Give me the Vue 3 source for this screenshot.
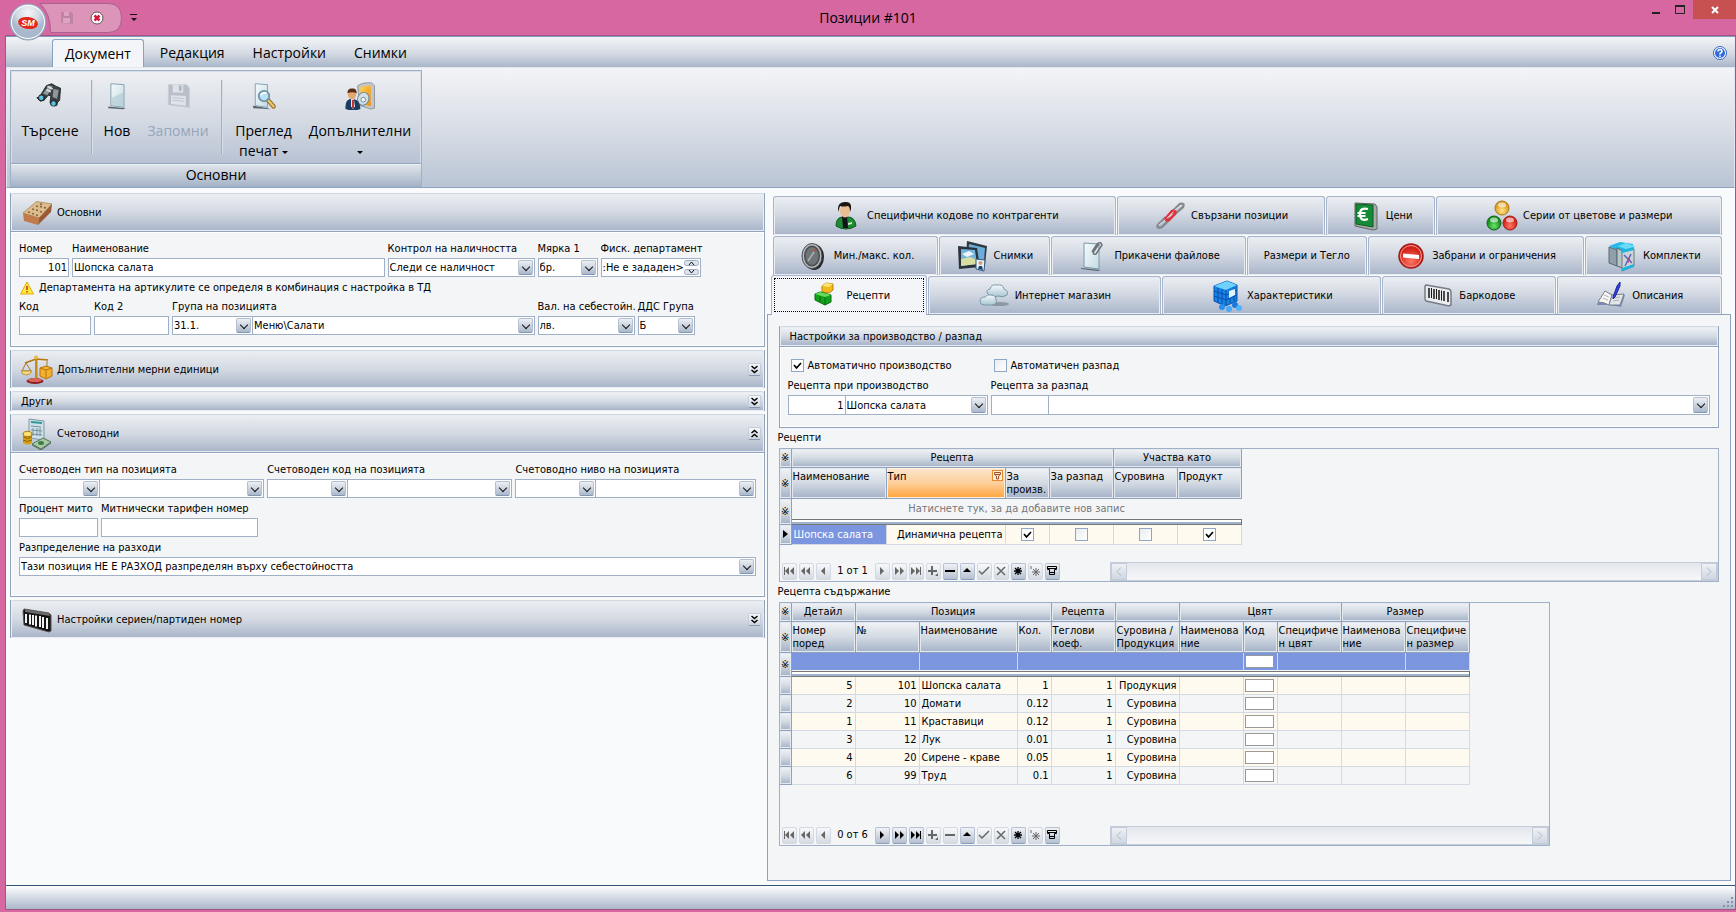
<script setup>
import { ref } from 'vue'

const icons = {
  binoculars: '<path d="M4 17 12 4l6-2 5 3 5 2-1 14-6 6-5-3 1-8-3-1-4 5-5 2-4-4z" fill="#3c4246" stroke="#1d2224"/><path d="M8 13 15 4l4 1-6 10zM20 8l6 1-2 10-5-2z" fill="#8f999c"/><path d="M13 5l6 3M12 9l5 2" stroke="#d8dfe0" stroke-width="2"/><circle cx="6.500" cy="18" r="4" fill="#2a3134"/><circle cx="6" cy="18" r="2.500" fill="#5bc3e4"/><ellipse cx="20.500" cy="24" rx="4.500" ry="4" fill="#2a3134"/><circle cx="20" cy="24.500" r="2.500" fill="#5bc3e4"/>',
  page: '<path d="M6 28 26 30l-3 1-17-1z" fill="#5a6670"/><path d="M9 2 24 3v26L9 27z" fill="url(#gPage)" stroke="#7b98a8"/><path d="M10 18 23 12v16l-13-2z" fill="#b4cdd6" opacity=".7"/>',
  floppyBig: '<path d="M5 3h21l3 4v22L5 26z" fill="#b9bfc9" stroke="#c8cdd5"/><path d="M10 3h12v9H10z" fill="#dfe2e7"/><path d="M17 4h3v6h-3z" fill="#aeb5c0"/><path d="M8 15l17 1v11L8 25z" fill="#dfe2e8"/><path d="M10 18l13 1M10 21l13 1" stroke="#bcc2cc"/>',
  preview: '<path d="M3 27 20 30l4 1-20-1z" fill="#59646e"/><path d="M6 2 20 3v26L6 27z" fill="url(#gPage)" stroke="#7b98a8"/><path d="m20 20 7 8" stroke="#94702b" stroke-width="5" stroke-linecap="round"/><path d="m20 20 7 8" stroke="#e9c971" stroke-width="2.500" stroke-linecap="round"/><circle cx="16" cy="16" r="6" fill="#b7e2f6" stroke="#6f8fa3" stroke-width="2"/><path d="M12 15q3-4 7-2" stroke="#fff" stroke-width="2" fill="none"/>',
  userDoor: '<path d="M14 4Q20 0 29 1l3 3v24l-4 1-12-4z" fill="#c3c7cb" stroke="#8c9298"/><path d="M17 5 28 4v22l-11-3z" fill="url(#gOrange)"/><ellipse cx="20" cy="18" rx="6" ry="7" fill="#cfe0e8" stroke="#6f8490" transform="rotate(20 20 18)"/><circle cx="20" cy="19" r="2.500" fill="#f6f9fa" stroke="#73848c"/><path d="M1 29q-1-11 7-11 8 0 9 11-8 3-16 0z" fill="#1c3d63"/><path d="M7 18h3l1 8-2 3-2-3z" fill="#fff"/><path d="m8 19 2 0 0 8-1 1-1-1z" fill="#c22"/><ellipse cx="8" cy="13" rx="4.500" ry="5.500" fill="#e3a770"/><path d="M3 12q0-6 6-5 4 0 4 5-5-2-10 0z" fill="#5b2e16"/>',
  brick: '<path d="M2 16 15 5q1-1 3 0l13 2-13 14z" fill="#dcbd8d" stroke="#b18351" stroke-width=".8"/><path d="M2 16 18 21l-1 7L3 24z" fill="#c07a4b"/><path d="M18 21 31 7l-1 8-13 13z" fill="#9a5b34"/><path d="m7 15 2 .5M11 12l2 .5M15 9l2 .5M11 16.500l2 .5M15 13l2 .5M19 9.500l2 .5M15 18l2 .5M19 14.500l2 .5M23 10.500l2 .5M19 7l2 .5M8 18" stroke="#8a6240" stroke-width="1.600"/>',
  scales: '<path d="M14 4h2.500v22H14z" fill="#c58b1d"/><path d="M4 9 15 5l12 1" stroke="#b57612" stroke-width="1.700" fill="none"/><path d="M5 9 1 17h9zM26 7v6" fill="none" stroke="#a77824"/><path d="M0 17h11q-1 4-6 4-4 0-5-4z" fill="#f3d98b" stroke="#b98523" stroke-width=".8"/><circle cx="15" cy="3.500" r="2" fill="#e9b840"/><path d="m19 14 6-2 6 2v8l-6 3-6-3z" fill="#f3b02c" stroke="#b9750e"/><path d="m19 14 6 2 6-2M25 16v8" stroke="#b9750e" fill="none"/><ellipse cx="14" cy="27" rx="8.500" ry="3" fill="#8f1f24"/><ellipse cx="14" cy="26" rx="7" ry="2" fill="#d8655a"/>',
  accounting: '<path d="m8 1 15 2v19L8 20z" fill="#cfe0e8" stroke="#7b98a8"/><path d="m10 4 11 1" stroke="#2f9a95" stroke-width="2"/><path d="m10 8 10 1M10 12l11 1M10 16l11 1M12 10v8M16 10v8M19 10v8" stroke="#70929f"/><path d="M2 16h9v9q-4 3-9 0z" fill="#d8a110"/><ellipse cx="6.500" cy="16" rx="4.500" ry="2.500" fill="#ffe373" stroke="#a87307"/><path d="M2 19q4 3 9 0M2 22q4 3 9 0" stroke="#8c5f00" fill="none"/><path d="m11 26 11-6 8 4-10 7z" fill="#a8c9a4" stroke="#52735a"/><ellipse cx="20" cy="25" rx="3" ry="2" fill="#3f7d4f"/><path d="m11 27 9 5 10-7" stroke="#52735a" fill="none"/>',
  barcodeDark: '<path d="M3 5 28 9l2 2v16l-2 1L3 21 2 7z" fill="#141414" stroke="#555"/><path d="M4 5.500 28 9l1 3L4 8z" fill="#6b6b6b"/><path d="M5 10v9M9 10.500v10M12 11v10M15 11.500v11M19 12v11M22 13v11M26 14v11" stroke="#f2f2f2" stroke-width="2"/>',
  man: '<path d="M6 26q0-9 7-9h5q7 0 8 9-10 6-20 0z" fill="#1f8a34" stroke="#0b5a1c"/><path d="m12 16 5 0 1 12h-5z" fill="#101418"/><path d="m18 23 4-1v2l-4 1z" fill="#cfeac8"/><ellipse cx="15" cy="11" rx="5" ry="6.500" fill="#eabd92"/><path d="M8 9Q8 2 15 2q7-1 6 7l-1 3q0-5-2-6-6 1-8 0-1 2-1 6z" fill="#1d1512"/>',
  chain: '<g fill="none" stroke-linecap="round"><path d="m4 25 7-7q4-1 3 3l-6 6q-6 2-4-2z" stroke="#868b90" stroke-width="2.500"/><path d="m20 10 6-6q5-1 3 3l-7 6q-5 1-2-3z" stroke="#868b90" stroke-width="2.500"/><path d="m12 18 6-7q5-1 3 3l-6 6q-5 1-3-2z" stroke="#e2303b" stroke-width="2.500"/><path d="m5 25 6-5M21 10l6-5" stroke="#e4e6e8"/><path d="m13 18 6-6" stroke="#ffb4b4"/></g>',
  euro: '<path d="m6 3 20 1 2 3v22l-4 1L6 26z" fill="#a7aba9" stroke="#606662"/><path d="m7 4 17 1v22L7 24z" fill="#168a37" stroke="#0a5c20"/><path d="M19 9q-8-2-8 5 0 8 8 5M8.500 13h8M8.500 16h8" stroke="#fff" stroke-width="2.200" fill="none"/>',
  balls: '<circle cx="16" cy="8" r="7" fill="url(#gGold)" stroke="#a77814"/><circle cx="8" cy="23" r="7" fill="url(#gGreen)" stroke="#11621a"/><circle cx="24" cy="23" r="7" fill="url(#gRed)" stroke="#98231a"/><ellipse cx="16" cy="5" rx="4" ry="2.500" fill="#fff" opacity=".6"/><ellipse cx="8" cy="20" rx="4" ry="2.500" fill="#fff" opacity=".6"/><ellipse cx="24" cy="20" rx="4" ry="2.500" fill="#fff" opacity=".6"/>',
  dial: '<ellipse cx="17" cy="17" rx="10" ry="13" fill="#24272a"/><ellipse cx="15" cy="16" rx="10" ry="12.500" fill="#b5b9bb" stroke="#4c5054"/><ellipse cx="15" cy="16" rx="8" ry="10.500" fill="#484d50"/><ellipse cx="15" cy="16" rx="6.500" ry="9" fill="#6f7477"/><path d="m11 21 6-9" stroke="#aeb2b4" stroke-width="1.500"/><path d="m17.500 11 1.500-2" stroke="#e23b2a" stroke-width="1.500"/>',
  photos: '<path d="m10 1 20 5-2 19L9 19z" fill="#303940"/><path d="m12 4 16 4-1 13-16-4z" fill="#6cacd8"/><path d="M1 6 20 8l3 19L2 29z" fill="#28333c"/><path d="m4 9 14 1 2 14-16 2z" fill="#74b4df"/><path d="m4 19 9-2 7 3v4L4 26z" fill="#d8dfa0"/><path d="m5 14 7-3 5 3-7 3z" fill="#eff7fb"/><path d="m19 19 9 1-1 11-8-2z" fill="#e8f2f9" stroke="#33597a"/><circle cx="23.500" cy="23" r="2" fill="#d99d70"/><path d="m21 29 1-3h3l1 4z" fill="#1c4774"/>',
  attach: '<path d="m4 28 20 2-3 1-17-2z" fill="#59646e"/><path d="M7 3 22 4v25L7 27z" fill="url(#gPage)" stroke="#7b98a8"/><path d="m15 12 5-8q4-3 5 1l-6 9q-4 1-2-3l5-7" stroke="#6d7378" stroke-width="1.500" fill="none"/>',
  noEntry: '<circle cx="16" cy="16" r="12" fill="url(#gRed)" stroke="#a51b16" stroke-width="1.500"/><circle cx="16" cy="16" r="10.500" fill="none" stroke="#f59a90"/><path d="M8 13.500 24 15v4L8 17.500z" fill="#fff"/>',
  boxes: '<path d="m3 6 11-4 13 2v5l-12 3z" fill="#25b9e8"/><path d="m3 7 8 3v16l-8-3z" fill="#8fa0a8" stroke="#5a6a73"/><path d="m11 8 6 3v17l-6-2z" fill="#b9c5ca" stroke="#5a6a73"/><path d="m12 6 8-3 9 3-7 4z" fill="#6bdcf7"/><path d="m16 11 12-2v17l-12 5z" fill="#cdd4d6" stroke="#697a81"/><path d="m16 10 12-3v3l-12 3zM16 28l12-4v3l-12 4z" fill="#1fb4df"/><path d="m18 15 8 8M25 14l-6 12" stroke="#5a62c8" stroke-width="1.500"/><path d="m21 18 3 1-2 4" stroke="#d33b6f" fill="none"/>',
  cubes: '<path d="m14 6 4-3 7 1v6l-4 3-7-1z" fill="#f3b91a" stroke="#b9830d"/><path d="m14 6 7 1 4-3-7-1z" fill="#ffe574"/><path d="m7 14 5-2 11 3v7l-6 3-10-5z" fill="#12a31c" stroke="#0a6a12"/><path d="m7 14 5-2 11 3-6 2z" fill="#63de5a"/><path d="m17 17v8M12 16v6" stroke="#0a6a12"/>',
  clouds: '<ellipse cx="21" cy="24" rx="10" ry="2" fill="#6b7880" opacity=".6"/><path d="M10 14q-3-4 2-5 1-5 7-4 6-1 7 4 5 2 3 6-4 3-9 1-7 2-10-2z" fill="url(#gCloud)" stroke="#7b98a6"/><path d="M2 21q0-4 5-4 2-3 6-2 5 0 5 5 2 4-4 5H6q-4 0-4-4z" fill="url(#gCloud)" stroke="#7b98a6"/>',
  blueCube: '<path d="M4 6 17 1l10 4v16l-12 5L4 21z" fill="#1684e2" stroke="#0a4ea8"/><path d="m4 6 12 4 11-5-10-4z" fill="#6fd1ff"/><path d="M16 10v15M8 8v15M12 9v15M20 9v14M24 7v14M4 11l12 4 11-5M4 16l12 4 11-5" stroke="#0b4dad" fill="none"/><path d="m19 11 6-2v6l-6 3z" fill="#dff4ff"/><circle cx="12" cy="27" r="3" fill="#2b8ff0"/><circle cx="19" cy="29" r="3" fill="#46a9fa"/><circle cx="25" cy="25" r="3" fill="#1778dd"/><circle cx="29" cy="28" r="3" fill="#4cb4ff"/>',
  barcodeLight: '<path d="M4 5 27 9q2 1 2 3v13l-2 1L4 21q-1-1-1-3V6z" fill="#e9ebee" stroke="#757c86" stroke-width="1.500"/><path d="M7 8v10M12 9v10M17 10v10M22 11v10M26 12v10" stroke="#151515" stroke-width="1.500"/><path d="M9.500 8v10M14.500 9v10M19.500 10.500v10" stroke="#151515"/>',
  notebook: '<path d="m2 24 7-11 8 2 13 0-4 12-11-2-13 0z" fill="#7c87bd"/><path d="m3 22 7-11 7 4-3 10q-5-3-11-3z" fill="#f7f8f4" stroke="#77808a"/><path d="m17 15 12-1-4 11-11 0z" fill="#e2e6e8" stroke="#77808a"/><path d="m9 15 5 2M8 18l5 2M19 18l6-1M18 21l6-1" stroke="#aeb4b8"/><path d="m18 17 4-11 3-4 0 4-5 11-2 2z" fill="#3340dd" stroke="#20279e"/>',
}

const sideGroups = [{ label: 'Основни', icon: 'brick' }]
const tabRows = [
  [
    { t: 'Специфични кодове по контрагенти', i: 'man', w: 346 },
    { t: 'Свързани позиции', i: 'chain', w: 208 },
    { t: 'Цени', i: 'euro', w: 109 },
    { t: 'Серии от цветове и размери', i: 'balls', w: 287 },
  ],
  [
    { t: 'Мин./макс. кол.', i: 'dial', w: 167 },
    { t: 'Снимки', i: 'photos', w: 111 },
    { t: 'Прикачени файлове', i: 'attach', w: 196 },
    { t: 'Размери и Тегло', w: 120 },
    { t: 'Забрани и ограничения', i: 'noEntry', w: 218 },
    { t: 'Комплекти', i: 'boxes', w: 138 },
  ],
  [
    { t: 'Рецепти', i: 'cubes', w: 157, on: true },
    { t: 'Интернет магазин', i: 'clouds', w: 234 },
    { t: 'Характеристики', i: 'blueCube', w: 221 },
    { t: 'Баркодове', i: 'barcodeLight', w: 174 },
    { t: 'Описания', i: 'notebook', w: 166 },
  ],
]

const accounts = ['Счетоводен тип на позицията', 'Счетоводен код на позицията', 'Счетоводно ниво на позицията']

const autoMake = ref(true)
const autoSplit = ref(false)
const number = ref('101')
const name = ref('Шопска салата')
const recipeNo = ref('1')

const heads = [
  'Номер\nпоред', '№', 'Наименование', 'Кол.', 'Теглови\nкоеф.', 'Суровина /\nПродукция',
  'Наименова\nние', 'Код', 'Специфиче\nн цвят', 'Наименова\nние', 'Специфиче\nн размер',
]
const rows = [
  [5, 101, 'Шопска салата', '1', 'Продукция'],
  [2, 10, 'Домати', '0.12', 'Суровина'],
  [1, 11, 'Краставици', '0.12', 'Суровина'],
  [3, 12, 'Лук', '0.01', 'Суровина'],
  [4, 20, 'Сирене - краве', '0.05', 'Суровина'],
  [6, 99, 'Труд', '0.1', 'Суровина'],
]

const nav = {
  first: { n: 'Първи', d: '<path d="M2 3h1v8H2zM7 3v8L3 7zM12 3v8L8 7z"/>' },
  prevPage: { n: 'Предишна страница', d: '<path d="M6 3v8L2 7zM11 3v8L7 7z"/>' },
  prev: { n: 'Предишен', d: '<path d="M9 3v8L5 7z"/>' },
  next: { n: 'Следващ', d: '<path d="M5 3v8l4-4z"/>' },
  nextPage: { n: 'Следваща страница', d: '<path d="M3 3v8l4-4zM8 3v8l4-4z"/>' },
  last: { n: 'Последен', d: '<path d="M2 3v8l4-4zM7 3v8l4-4zM11 3h1v8h-1z"/>' },
  add: { n: 'Добави', d: '<path d="M5 2h2v4h4v2H7v3H5V8H2V6h3zM12 9v3H9z"/>' },
  remove: { n: 'Изтрий', d: '<path d="M2 6h10v2H2z"/>' },
  edit: { n: 'Редактирай', d: '<path d="m7 4 4 4H3z"/>' },
  post: { n: 'Потвърди', d: '<path d="m2 7 3 3 7-7" fill="none" stroke="currentColor" stroke-width="1.500"/>' },
  cancel: { n: 'Откажи', d: '<path d="m3 3 8 8M11 3l-8 8" fill="none" stroke="currentColor" stroke-width="1.500"/>' },
  mark: { n: 'Запомни позиция', d: '<path d="M7 3v8M3 7h8M4 4l6 6M10 4l-6 6" fill="none" stroke="currentColor" stroke-width="1.300"/>' },
  goMark: { n: 'Отиди на позиция', d: '<path d="M8 4v8M4 8h8M5 5l6 6M11 5l-6 6M3 2v3" fill="none" stroke="currentColor"/>' },
  filter: { n: 'Филтър', d: '<path d="M2.500 2.500h9v3h-2v5h-5v-5h-2zM3 4.500h8M5 8.500h4" fill="none" stroke="currentColor"/>' },
}
const left = ['first', 'prevPage', 'prev']
const right = ['next', 'nextPage', 'last', 'add', 'remove', 'edit', 'post', 'cancel', 'mark', 'goMark', 'filter']
const enabledOne = ['remove', 'edit', 'mark', 'filter']
const enabledTwo = ['next', 'nextPage', 'last', 'edit', 'mark', 'filter']
const isOn = (list, k) => list.includes(k)
</script>

<template>
  <div class="window">
    <svg class="defs" width="0" height="0" aria-hidden="true">
      <defs>
        <linearGradient id="gPage" x1="0" y1="0" x2="1" y2="1"><stop offset="0" stop-color="#f5fbfd" /><stop offset="1" stop-color="#c3dbe3" /></linearGradient>
        <linearGradient id="gOrange" x1="0" y1="0" x2="1" y2="1"><stop offset="0" stop-color="#ffd24a" /><stop offset="1" stop-color="#f28a0c" /></linearGradient>
        <linearGradient id="gCloud" x1="0" y1="0" x2="0" y2="1"><stop offset="0" stop-color="#f4fafc" /><stop offset="1" stop-color="#a9c6d2" /></linearGradient>
        <radialGradient id="gGold" cy=".7"><stop offset="0" stop-color="#ffe48c" /><stop offset="1" stop-color="#dd9d1c" /></radialGradient>
        <radialGradient id="gGreen" cy=".7"><stop offset="0" stop-color="#6ee36a" /><stop offset="1" stop-color="#0f8f1c" /></radialGradient>
        <radialGradient id="gRed" cy=".7"><stop offset="0" stop-color="#ff7a62" /><stop offset="1" stop-color="#d3241c" /></radialGradient>
        <radialGradient id="gOrb" cy=".25"><stop offset="0" stop-color="#f6f8fa" /><stop offset=".6" stop-color="#d3dae4" /><stop offset="1" stop-color="#a9b8cc" /></radialGradient>
      </defs>
    </svg>

    <header class="titlebar">
      <div class="quick">
        <svg class="quick-shape" width="130" height="36" viewBox="0 0 130 36" aria-hidden="true">
          <path d="M40 3.500H108Q121.500 3.500 121.500 18T108 32.500H50.500Q51 14 40 3.500z" fill="#dd94b9" stroke="#a9628c" />
        </svg>
        <button class="qbtn" aria-label="Запис" disabled>
          <svg width="14" height="14" viewBox="0 0 14 14"><path d="M1 1h10l2 2v10L1 12z" fill="#c084a3" /><path d="M4 1h5v4H4zM3 7h7v5H3z" fill="#dfa3c1" /></svg>
        </button>
        <button class="qbtn" aria-label="Отказ">
          <svg width="14" height="14" viewBox="0 0 14 14"><circle cx="7" cy="7" r="6" fill="#fff" stroke="#555" /><path d="m4.500 4.500 5 5M9.500 4.500l-5 5" stroke="#d4183c" stroke-width="2.500" /></svg>
        </button>
        <button class="qmenu" aria-label="Настройка на лентата">
          <svg width="8" height="8" viewBox="0 0 8 8"><path d="M0 0h7v1H0zM1 4h6L4 7z" fill="#111" /></svg>
        </button>
      </div>
      <button class="orb" aria-label="Меню">
        <svg width="38" height="38" viewBox="0 0 38 38">
          <circle cx="19" cy="19" r="18" fill="url(#gOrb)" stroke="#8ea0b9" />
          <circle cx="19" cy="19" r="16.500" fill="none" stroke="#fff" />
          <ellipse cx="19" cy="20" rx="10" ry="6" fill="#e2291d" transform="rotate(8 19 20)" />
          <text x="19" y="23" text-anchor="middle" class="orb-text">SM</text>
        </svg>
      </button>
      <h1>Позиции #101</h1>
      <div class="wbtns">
        <button class="min" aria-label="Минимизирай"><svg width="10" height="10" viewBox="0 0 10 10"><path d="M1 7h8v2H1z" fill="#222" /></svg></button>
        <button class="max" aria-label="Увеличи"><svg width="10" height="10" viewBox="0 0 10 10"><path d="M.5 1h9v7.500h-9z" fill="none" stroke="#222" /><path d="M0 0h10v2H0z" fill="#222" /></svg></button>
        <button class="close" aria-label="Затвори"><svg width="8" height="8" viewBox="0 0 8 8"><path d="m1 1 6 6M7 1 1 7" stroke="#fff" stroke-width="2" /></svg></button>
      </div>
    </header>

    <div class="frame">
      <nav class="rtabs">
        <button class="rtab on">Документ</button>
        <button class="rtab">Редакция</button>
        <button class="rtab">Настройки</button>
        <button class="rtab">Снимки</button>
        <button class="help" aria-label="Помощ">
          <svg width="14" height="14" viewBox="0 0 14 14"><circle cx="7" cy="7" r="6.500" fill="#fff" stroke="#2d62c4" /><circle cx="7" cy="7" r="5" fill="#2f6ad9" /><path d="M5 5.500q0-2 2-2t2 2q0 1-2 2v1M7 9.500v1.500" fill="none" stroke="#fff" stroke-width="1.500" /></svg>
        </button>
      </nav>

      <div class="ribbon">
        <section class="rgroup">
          <div class="ritems">
            <button class="rbtn w76"><svg width="28" height="28" viewBox="0 0 32 32" v-html="icons.binoculars"></svg><span>Търсене</span></button>
            <i class="rsep"></i>
            <button class="rbtn w42"><svg width="28" height="28" viewBox="0 0 32 32" v-html="icons.page"></svg><span>Нов</span></button>
            <button class="rbtn w80 off" disabled><svg width="28" height="28" viewBox="0 0 32 32" v-html="icons.floppyBig"></svg><span>Запомни</span></button>
            <i class="rsep"></i>
            <button class="rbtn w75"><svg width="28" height="28" viewBox="0 0 32 32" v-html="icons.preview"></svg><span>Преглед</span><span>печат <i class="tri"></i></span></button>
            <button class="rbtn w118"><svg width="32" height="28" viewBox="0 0 33 30" v-html="icons.userDoor"></svg><span>Допълнителни</span><span><i class="tri"></i></span></button>
          </div>
          <div class="rcap">Основни</div>
        </section>
      </div>

      <main class="body">
        <div class="side">
          <section v-for="g in sideGroups" :key="g.label" class="group">
            <h2 class="ghead"><svg width="32" height="32" viewBox="0 0 32 32" v-html="icons[g.icon]"></svg>{{ g.label }}</h2>
            <div class="gbody first">
              <div class="frow pad">
                <label class="f w50">Номер<input v-model="number" class="num"></label>
                <label class="f grow">Наименование<input v-model="name"></label>
                <label class="f w147">Контрол на наличността<span class="combo"><select><option>Следи се наличност</option></select><i class="arr"></i></span></label>
                <label class="f w60">Мярка 1<span class="combo"><select><option>бр.</option></select><i class="arr"></i></span></label>
                <label class="f w100">Фиск. департамент
                  <span class="combo spin"><input value=":Не е зададен&gt;"><svg class="spins" width="15" height="15" viewBox="0 0 15 15"><rect x=".5" y=".5" width="14" height="5" rx="2" fill="#dfe4ec" stroke="#9babc2" /><rect x=".5" y="9.500" width="14" height="5" rx="2" fill="#dfe4ec" stroke="#9babc2" /><path d="m5 5 2.500-3L10 5M5 10l2.500 3L10 10" fill="none" stroke="#111" /></svg></span>
                </label>
              </div>
              <p class="warn"><svg width="14" height="14" viewBox="0 0 14 14"><path d="M7 1 13.500 13H.5z" fill="#ffec3d" stroke="#e2ac08" /><path d="M7 5v4M7 10v1.500" stroke="#d92a1a" stroke-width="1.500" /></svg>Департамента на артикулите се определя в комбинация с настройка в ТД</p>
              <div class="frow pad2">
                <label class="f w72">Код<input></label>
                <label class="f w75">Код 2<input></label>
                <div class="f grow"><label for="grp">Група на позицията</label>
                  <div class="pair">
                    <span class="combo w81"><select id="grp"><option>31.1.</option></select><i class="arr"></i></span>
                    <span class="combo grow"><select aria-label="Име на група"><option>Меню\Салати</option></select><i class="arr"></i></span>
                  </div>
                </div>
                <label class="f w97">Вал. на себестойн.<span class="combo"><select><option>лв.</option></select><i class="arr"></i></span></label>
                <label class="f w57">ДДС Група<span class="combo"><select><option>Б</option></select><i class="arr"></i></span></label>
              </div>
            </div>
          </section>

          <section class="group closed"><h2 class="ghead"><svg width="32" height="32" viewBox="0 0 32 32" v-html="icons.scales"></svg>Допълнителни мерни единици<button class="exp" aria-label="Разгъни"><svg width="9" height="9" viewBox="0 0 9 9"><path d="m1.500 1 3 2.500 3-2.500M1.500 5l3 2.500 3-2.500" /></svg></button></h2></section>
          <section class="group closed"><h2 class="ghead thin">Други<button class="exp" aria-label="Разгъни"><svg width="9" height="9" viewBox="0 0 9 9"><path d="m1.500 1 3 2.500 3-2.500M1.500 5l3 2.500 3-2.500" /></svg></button></h2></section>
          <section class="group">
            <h2 class="ghead"><svg width="32" height="32" viewBox="0 0 32 32" v-html="icons.accounting"></svg>Счетоводни<button class="exp" aria-label="Свий"><svg width="9" height="9" viewBox="0 0 9 9"><path d="m1.500 4 3-2.500 3 2.500M1.500 8l3-2.500 3 2.500" /></svg></button></h2>
            <div class="gbody acc">
              <div class="frow thirds">
                <div v-for="(a, k) in accounts" :key="a" class="f">
                  <label :for="'acc' + k">{{ a }}</label>
                  <div class="pair">
                    <span class="combo w81"><select :id="'acc' + k"><option></option></select><i class="arr"></i></span>
                    <span class="combo grow"><select :aria-label="a"><option></option></select><i class="arr"></i></span>
                  </div>
                </div>
              </div>
              <div class="frow">
                <label class="f w79">Процент мито<input></label>
                <label class="f w157">Митнически тарифен номер<input></label>
              </div>
              <div class="frow">
                <label class="f grow">Разпределение на разходи<span class="combo"><select><option>Тази позиция НЕ Е РАЗХОД разпределян върху себестойността</option></select><i class="arr"></i></span></label>
              </div>
            </div>
          </section>
          <section class="group closed"><h2 class="ghead"><svg width="32" height="32" viewBox="0 0 32 32" v-html="icons.barcodeDark"></svg>Настройки сериен/партиден номер<button class="exp" aria-label="Разгъни"><svg width="9" height="9" viewBox="0 0 9 9"><path d="m1.500 1 3 2.500 3-2.500M1.500 5l3 2.500 3-2.500" /></svg></button></h2></section>
        </div>

        <div class="details">
          <div class="tabs">
            <div v-for="(r, k) in tabRows" :key="k" class="tabrow">
              <button v-for="t in r" :key="t.t" class="tab" :class="{ on: t.on }" :style="{ flexGrow: t.w }">
                <svg v-if="t.i" width="32" height="32" viewBox="0 0 32 32" v-html="icons[t.i]"></svg>{{ t.t }}
              </button>
            </div>
          </div>

          <div class="panel">
            <section class="group">
              <h2 class="ghead thin">Настройки за производство / разпад</h2>
              <div class="gbody prod">
                <label class="chk"><input v-model="autoMake" type="checkbox">Автоматично производство</label>
                <label class="chk"><input v-model="autoSplit" type="checkbox">Автоматичен разпад</label>
                <div class="f">
                  <label for="rec">Рецепта при производство</label>
                  <div class="pair">
                    <input id="rec" v-model="recipeNo" class="num w58">
                    <span class="combo grow"><select aria-label="Рецепта"><option>Шопска салата</option></select><i class="arr"></i></span>
                  </div>
                </div>
                <div class="f">
                  <label for="rec2">Рецепта за разпад</label>
                  <div class="pair">
                    <input id="rec2" class="num w58">
                    <span class="combo grow"><select aria-label="Рецепта за разпад, име"><option></option></select><i class="arr"></i></span>
                  </div>
                </div>
              </div>
            </section>

            <h3>Рецепти</h3>
            <div class="grid one">
              <table class="t1">
                <colgroup><col class="c12"><col class="c95"><col class="c119"><col class="c44"><col class="c64"><col class="c64"><col class="c64"></colgroup>
                <thead>
                  <tr class="band"><th class="ind">※</th><th colspan="4">Рецепта</th><th colspan="2">Участва като</th></tr>
                  <tr class="cols"><th class="ind">※</th><th>Наименование</th>
                    <th class="hot"><div class="hotrow">Тип<button aria-label="Филтър"><svg width="9" height="9" viewBox="0 0 9 9"><path d="M1.500 1.500h6v2l-2 1.500v3h-2V5l-2-1.500zM2 3.500h5" fill="none" stroke="#a8502a" /></svg></button></div></th>
                    <th>За<br>произв.</th><th>За разпад</th><th>Суровина</th><th>Продукт</th></tr>
                </thead>
                <tbody>
                  <tr class="newrow"><th class="ind" rowspan="2">※</th><td colspan="6">Натиснете тук, за да добавите нов запис</td></tr>
                  <tr class="split"><td colspan="6"></td></tr>
                  <tr class="rec odd"><th class="ind"><svg width="5" height="8" viewBox="0 0 5 8"><path d="M0 0v8l5-4z" /></svg></th><td class="sel">Шопска салата</td><td class="r">Динамична рецепта</td>
                    <td class="c"><input type="checkbox" aria-label="За произв." checked></td><td class="c"><input type="checkbox" aria-label="За разпад"></td>
                    <td class="c"><input type="checkbox" aria-label="Суровина"></td><td class="c"><input type="checkbox" aria-label="Продукт" checked></td></tr>
                </tbody>
              </table>
              <div class="foot">
                <div class="nav">
                  <button v-for="k in left" :key="k" :aria-label="nav[k].n" disabled><svg width="14" height="14" viewBox="0 0 14 14" v-html="nav[k].d"></svg></button>
                  <span>1 от 1</span>
                  <button v-for="k in right" :key="k" :aria-label="nav[k].n" :disabled="!isOn(enabledOne, k)"><svg width="14" height="14" viewBox="0 0 14 14" v-html="nav[k].d"></svg></button>
                </div>
                <div class="scroll"><button aria-label="Наляво" disabled><svg width="6" height="9" viewBox="0 0 6 9"><path d="M5 .5 1 4.500l4 4" /></svg></button><i></i><button aria-label="Надясно" disabled><svg width="6" height="9" viewBox="0 0 6 9"><path d="m1 .5 4 4-4 4" /></svg></button></div>
              </div>
            </div>

            <h3>Рецепта съдържание</h3>
            <div class="grid two">
              <table class="t2">
                <colgroup><col class="c12"><col class="c64"><col class="c64"><col class="c98"><col class="c34"><col class="c64"><col class="c64"><col class="c64"><col class="c34"><col class="c64"><col class="c64"><col class="c64"></colgroup>
                <thead>
                  <tr class="band"><th class="ind">※</th><th>Детайл</th><th colspan="3">Позиция</th><th>Рецепта</th><th></th><th colspan="3">Цвят</th><th colspan="2">Размер</th></tr>
                  <tr class="cols"><th class="ind">※</th><th v-for="(h, k) in heads" :key="k">{{ h }}</th></tr>
                </thead>
                <tbody>
                  <tr class="blue"><th class="ind" rowspan="2">※</th><td colspan="2"></td><td></td><td colspan="4"></td><td><i class="swatch"></i></td><td colspan="2"></td><td></td></tr>
                  <tr class="split"><td colspan="11"></td></tr>
                  <tr v-for="(r, k) in rows" :key="k" class="row" :class="{ odd: k % 2 === 0 }">
                    <th class="ind"></th><td class="r">{{ r[0] }}</td><td class="r">{{ r[1] }}</td><td>{{ r[2] }}</td><td class="r">{{ r[3] }}</td><td class="r">1</td><td class="r">{{ r[4] }}</td>
                    <td></td><td><i class="swatch"></i></td><td></td><td></td><td></td>
                  </tr>
                </tbody>
              </table>
              <div class="foot">
                <div class="nav">
                  <button v-for="k in left" :key="k" :aria-label="nav[k].n" disabled><svg width="14" height="14" viewBox="0 0 14 14" v-html="nav[k].d"></svg></button>
                  <span>0 от 6</span>
                  <button v-for="k in right" :key="k" :aria-label="nav[k].n" :disabled="!isOn(enabledTwo, k)"><svg width="14" height="14" viewBox="0 0 14 14" v-html="nav[k].d"></svg></button>
                </div>
                <div class="scroll"><button aria-label="Наляво" disabled><svg width="6" height="9" viewBox="0 0 6 9"><path d="M5 .5 1 4.500l4 4" /></svg></button><i></i><button aria-label="Надясно" disabled><svg width="6" height="9" viewBox="0 0 6 9"><path d="m1 .5 4 4-4 4" /></svg></button></div>
              </div>
            </div>
          </div>
        </div>
      </main>

      <footer class="status">
        <svg width="12" height="12" viewBox="0 0 12 12"><path d="M8 0h2v2H8zM8 4h2v2H8zM4 4h2v2H4zM8 8h2v2H8zM4 8h2v2H4zM0 8h2v2H0z" fill="#8193ad" /></svg>
      </footer>
    </div>
  </div>
</template>

<style>
body { background: #d667a1; }
</style>

<style scoped>
* { box-sizing: border-box; }
.window { min-height: 100vh; display: flex; flex-direction: column; background: #d667a1; color: #000; font: 11px/16px "DejaVu Sans Condensed", "Noto Sans", sans-serif; }
.defs { position: absolute; }
button, input, select { font: inherit; color: inherit; margin: 0; padding: 0; border: 0; background: none; border-radius: 0; }
h1, h2, h3, p { margin: 0; font-weight: normal; }
h1 { font-size: 14px; }
h2, h3 { font-size: 11px; }
i { font-style: normal; }

.titlebar { position: relative; display: grid; grid-template-columns: 1fr auto 1fr; height: 36px; align-items: center; font: 14px/20px "Open Sans", "Noto Sans", sans-serif; }
.quick { position: relative; display: flex; align-items: center; gap: 16px; padding-left: 60px; height: 36px; }
.quick-shape { position: absolute; left: 0; top: 0; }
.qbtn, .qmenu { position: relative; display: flex; width: 14px; }
.qmenu { margin-left: 10px; }
.orb { position: absolute; left: 9px; top: 3px; z-index: 2; height: 38px; }
.orb-text { font: italic bold 9px "Liberation Sans", sans-serif; fill: #fff; }
.wbtns { display: flex; justify-content: flex-end; align-self: start; }
.wbtns button { display: flex; align-items: center; justify-content: center; height: 19px; width: 24px; }
.wbtns .close { width: 43px; margin-left: 1px; background: #c75050; }

.frame { flex: 1; display: flex; flex-direction: column; margin: 0 1px 4px 6px; background: #f9fafc; border-top: 1px solid #7f9cbf; box-shadow: 0 0 0 1px #a85283; }
.rtabs { display: flex; align-items: flex-end; height: 30px; padding-left: 46px; background: linear-gradient(#f3f4f6, #d4dae3 55%, #a9b6ca); font: 14px/20px "Open Sans", "Noto Sans", sans-serif; }
.rtab { height: 28px; padding: 0 12px; margin-right: 4px; }
.rtab.on { background: #f4f5f8; border: 1px solid #8aa2c2; border-bottom: 0; border-radius: 3px 3px 0 0; }
.help { margin: 0 8px 8px auto; height: 14px; }
.ribbon { padding: 2px 4px 1px 3px; height: 121px; background: linear-gradient(#f3f4f7, #d9dee6 50%, #b9c4d4); border: 1px solid #e3e8ee; border-bottom-color: #8fa3bf; }
.rgroup { display: inline-flex; flex-direction: column; height: 117px; background: linear-gradient(#eef0f3, #d3d9e2 45%, #a8b5ca); border: 1px solid #9fb1c8; box-shadow: inset 0 0 0 1px #d8dee7; font: 14px/20px "Open Sans", "Noto Sans", sans-serif; }
.ritems { display: flex; flex: 1; padding: 0 2px 0 1px; }
.rbtn { display: flex; flex-direction: column; align-items: center; padding-top: 11px; }
.rbtn svg { margin-bottom: 11px; }
.rbtn span { height: 20px; white-space: nowrap; }
.rbtn.off { color: #97a5bc; }
.w118 { width: 118px; } .w42 { width: 42px; } .w80 { width: 80px; }
.rsep { width: 2px; height: 74px; margin: 9px 3px 0 3px; border-left: 1px solid #9fb0c7; border-right: 1px solid #d9dfe8; }
.tri { display: inline-block; border: 3px solid transparent; border-top-color: #000; border-bottom: 0; vertical-align: middle; }
.rcap { height: 23px; line-height: 22px; text-align: center; background: linear-gradient(#e2e6ec, #a6b4c9); border-top: 1px solid #94a7c1; box-shadow: inset 0 1px #eef1f5; }

.body { flex: 1; display: grid; grid-template-columns: 755fr 965fr; gap: 2px; padding: 5px 4px 4px; }
.side { display: flex; flex-direction: column; gap: 3px; }
.group { border: 1px solid #8fa3bf; border-top: 0; }
.closed { border-bottom: 0; }
.ghead { display: flex; align-items: center; gap: 4px; height: 38px; padding: 0 3px 0 10px; background: linear-gradient(#eceef2, #d3d9e2 50%, #a8b4c9); border-top: 1px solid #cfd7e1; box-shadow: inset 0 0 0 1px #e9edf2; border-radius: 3px 3px 0 0; }
.ghead.thin { height: 20px; background: linear-gradient(#f1f3f6, #d3dae3 50%, #a2b0c6); }
.closed .thin { height: 20px; }
.exp { margin-left: auto; width: 13px; height: 13px; display: flex; align-items: center; justify-content: center; background: linear-gradient(#f7f8fa, #ccd4df); border: 1px solid #c4ccd8; border-bottom-color: #8596b0; border-radius: 2px; }
.exp path { fill: none; stroke: #000; stroke-width: 1.500; }
.gbody { background: #f3f5f7; border-top: 1px solid #8fa3bf; box-shadow: inset 0 0 0 1px #fff; }
.first { padding: 9px 8px 11px; }
.acc { padding: 9px 8px 20px; display: flex; flex-direction: column; gap: 3px; }
.frow { display: flex; gap: 3px; }
.pad { padding-right: 55px; }
.pad2 { padding-right: 61px; }
.f { display: flex; flex-direction: column; gap: 2px; line-height: 15px; white-space: nowrap; min-width: 0; }
.grow { flex: 1; min-width: 0; }
.thirds .f { flex: 49; }
.thirds .f:last-child { flex: 48; }
.f > label { display: block; }
.f input, .combo { height: 19px; border: 1px solid #9fb0c7; background: #fff; line-height: 17px; width: 100%; padding: 0 1px; }
.combo { position: relative; display: block; padding: 0; }
.combo select { appearance: none; width: 100%; height: 100%; padding: 0 20px 0 1px; outline: 0; }
.combo.spin input { border: 0; height: 17px; }
.arr { position: absolute; right: 1px; top: 1px; bottom: 1px; width: 15px; background: linear-gradient(#edf0f4, #aab8cc); border: 1px solid #b4c0d0; border-bottom-color: #8295b1; border-radius: 2px; pointer-events: none; }
.arr::after { content: ""; position: absolute; left: 4px; top: 3px; width: 5px; height: 5px; border: solid #111; border-width: 0 1px 1px 0; transform: rotate(45deg); }
.spins { position: absolute; right: 1px; top: 1px; }
.pair { display: flex; }
.pair > .grow { width: auto; margin-left: -1px; }
.pair .w81 { width: 81px; }
.num { text-align: right; }
.w50 { width: 50px; } .w57 { width: 57px; } .w60 { width: 60px; } .w72 { width: 72px; } .w75 { width: 75px; } .w76 { width: 76px; } .w79 { width: 79px; } .w97 { width: 97px; } .w100 { width: 100px; } .w147 { width: 147px; } .w157 { width: 157px; }
.warn { display: flex; align-items: center; gap: 5px; height: 22px; padding-left: 1px; }

.details { display: flex; flex-direction: column; min-width: 0; }
.tabs { padding: 3px 9px 0 6px; display: flex; flex-direction: column; gap: 1px; }
.tabrow { display: flex; gap: 1px; }
.tab { flex: 1 1 0; min-width: 0; height: 39px; display: flex; align-items: center; justify-content: center; gap: 5px; white-space: nowrap; background: linear-gradient(#eceef2, #d3d9e3 45%, #a9b5ca); border: 1px solid #a5b4c9; border-bottom: 0; border-radius: 3px 3px 0 0; box-shadow: inset 0 0 0 1px #e9edf2; }
.tabrow:last-child .tab { height: 38px; }
.tabrow:last-child .tab.on { position: relative; z-index: 1; margin: -1px 0 -1px -2px; height: 40px; background: #f4f5f8; outline: 1px dotted #000; outline-offset: -4px; box-shadow: none; gap: 7px; }
.panel { flex: 1; display: flex; flex-direction: column; padding: 11px 11px 34px; background: #f3f5f7; border: 1px solid #8fa3bf; }
.prod { display: grid; grid-template-columns: 200px 1fr; column-gap: 3px; padding: 9px 8px 12px; }
.chk { display: flex; align-items: center; gap: 4px; height: 19px; padding-left: 3px; }
.prod .f { margin-top: 3px; }
.prod .f input, .prod .combo { height: 20px; }
.prod .f .w58 { width: 58px; }
input[type="checkbox"] { appearance: none; width: 13px; height: 13px; border: 1px solid #8fa6c4; background: linear-gradient(135deg, #e9ecf0, #fff); }
input[type="checkbox"]:checked { background: #fff url("data:image/svg+xml,%3Csvg xmlns='http://www.w3.org/2000/svg' viewBox='0 0 11 11'%3E%3Cpath d='m2 5 2.500 3L9 3' fill='none' stroke='%23000' stroke-width='1.700'/%3E%3C/svg%3E"); }
h3 { height: 20px; line-height: 19px; margin-left: -1px; }
.grid { display: flex; flex-direction: column; border: 1px solid #9fb0c7; }
.one { min-height: 134px; }
.two { width: 82%; min-height: 244px; }
table { border-collapse: separate; border-spacing: 0; table-layout: fixed; }
.t1 { width: 462px; } .t2 { width: 690px; }
.c12 { width: 12px; } .c34 { width: 34px; } .c44 { width: 44px; } .c64 { width: 64px; } .c95 { width: 95px; } .c98 { width: 98px; } .c119 { width: 119px; }
th { font-weight: normal; padding: 0; border: solid #8fa3bf; border-width: 0 1px 1px 0; background: linear-gradient(#f1f3f6, #d3dae3 50%, #a4b2c7); box-shadow: inset 0 0 0 1px #e4e9ef; }
.band th { height: 19px; line-height: 16px; }
.cols th { height: 31px; padding: 2px 0 0 1px; text-align: left; vertical-align: top; line-height: 13px; white-space: pre; overflow: hidden; }
th.ind, .cols th.ind { padding: 0; font-size: 11px; text-align: center; vertical-align: middle; overflow: hidden; }
.cols th.hot { background: linear-gradient(#fde6cf, #fdcf9b 50%, #ffa43a); box-shadow: inset 0 0 0 1px #fff0dc; }
.hotrow { display: flex; justify-content: space-between; padding-right: 2px; }
.hotrow button { width: 11px; height: 11px; display: flex; border: 1px solid #e98b2c; background: #fdeedd; }
td { padding: 0 2px; border: solid #d3dae4; border-width: 0 1px 1px 0; white-space: nowrap; overflow: hidden; line-height: 16px; }
.newrow td { height: 20px; border: 0; text-align: center; color: #777; }
.split td { height: 6px; padding: 0; border: 1px solid #777; border-left: 0; background: linear-gradient(#fff 50%, #9fb3cc 50%); }
.rec td { height: 20px; }
.odd td { background: #fffaf0; }
.rec .sel { background: #7b96df; color: #fff; }
.r { text-align: right; }
.c { text-align: center; }
.c input { display: block; margin: 0 auto; }
.blue td { height: 18px; background: #7b96df; border-bottom-color: #f3f5f7; }
.row td, .row th { height: 18px; }
.swatch { display: block; width: 29px; height: 13px; margin: auto; margin-left: -1px; background: #fff; border: 1px solid #999; }
.foot { margin-top: auto; display: flex; align-items: center; height: 20px; }
.nav { display: flex; gap: 2px; width: 330px; padding-left: 2px; }
.nav span { width: 40px; text-align: center; }
.nav button { width: 15px; height: 17px; display: flex; align-items: center; justify-content: center; border: 1px solid #b6c2d2; border-bottom-color: #8b9cb6; border-radius: 2px; background: linear-gradient(#f0f2f5, #b4c0d1); }
.nav button svg { flex: none; fill: currentColor; }
.nav button:disabled { color: #666; border-color: #d3d9e2; background: linear-gradient(#f7f8fa, #d5dbe4); }
.scroll { flex: 1; display: flex; height: 19px; border: 1px solid #c4ccd9; background: linear-gradient(#e3e7ec, #f6f7f9); }
.scroll i { flex: 1; }
.scroll button { width: 16px; display: flex; align-items: center; justify-content: center; border: 1px solid #c4ccd9; background: linear-gradient(#eff1f5, #cfd7e1); }
.scroll path { fill: none; stroke: #adb7c5; }

.status { display: flex; align-items: flex-end; justify-content: flex-end; height: 24px; border-top: 1px solid #34557a; background: linear-gradient(#fff, #e0e5ec 35%, #abb8cb); }
.w75 { width: 75px; }
</style>
